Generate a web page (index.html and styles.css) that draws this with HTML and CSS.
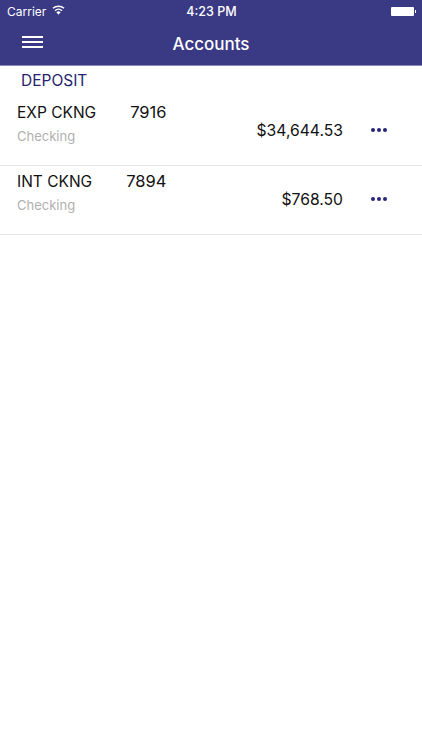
FILE: index.html
```html
<!DOCTYPE html>
<html lang="en">
<head>
  <meta charset="UTF-8" />
  <meta name="viewport" content="width=device-width, initial-scale=1" />
  <title>Accounts</title>
  <link rel="stylesheet" href="styles.css">
</head>
<body>
  <header class="topbar">
    <div class="status">
      <div class="status-left">
        <span>Carrier</span>
        <svg class="wifi" width="13" height="10" viewBox="0 0 14 10">
          <path d="M7 10 4.7 7.3a3.4 3.4 0 0 1 4.6 0z" fill="#fff"/>
          <path d="M3.3 5.7a5.4 5.4 0 0 1 7.4 0" fill="none" stroke="#fff" stroke-width="1.5"/>
          <path d="M1 3.2a9 9 0 0 1 12 0" fill="none" stroke="#fff" stroke-width="1.5"/>
        </svg>
      </div>
      <span class="clock">4:23 PM</span>
      <div class="battery"><div class="battery-fill"></div><div class="battery-tip"></div></div>
    </div>
    <nav class="navbar">
      <button class="menu" aria-label="Menu"><span></span><span></span><span></span></button>
      <h1>Accounts</h1>
    </nav>
  </header>

  <main>
    <h2 class="section">DEPOSIT</h2>

    <div class="account">
      <div class="info">
        <div class="title"><span>EXP CKNG</span><span class="num">7916</span></div>
        <div class="type">Checking</div>
      </div>
      <div class="amount">$34,644.53</div>
      <div class="dots"><i></i><i></i><i></i></div>
    </div>

    <div class="account">
      <div class="info">
        <div class="title"><span>INT CKNG</span><span class="num">7894</span></div>
        <div class="type">Checking</div>
      </div>
      <div class="amount">$768.50</div>
      <div class="dots"><i></i><i></i><i></i></div>
    </div>
  </main>
</body>
</html>
```

FILE: styles.css
```css
body {
  margin: 0;
  background: #fff;
  font-family: Inter, "Liberation Sans", Arial, sans-serif;
  color: #111;
}

.topbar {
  background: #3a3984;
  color: #fff;
  height: 65px;
  border-bottom: 1px solid #8a8ab8;
}
.status {
  height: 22px;
  display: flex;
  align-items: center;
  justify-content: space-between;
  padding: 0 6px 0 7px;
  font-size: 12px;
  position: relative;
}
.status-left {
  display: flex;
  align-items: center;
  gap: 6px;
}
.wifi { margin-top: -3px; }
.clock {
  position: absolute;
  left: 1px;
  right: 0;
  text-align: center;
  font-size: 12.5px;
  font-weight: 500;
}
.battery {
  display: flex;
  align-items: center;
  gap: 1px;
}
.battery-fill {
  width: 23px;
  height: 9px;
  background: #fff;
  border-radius: 1px;
}
.battery-tip {
  width: 1px;
  height: 3px;
  background: #fff;
}

.navbar {
  height: 43px;
  display: flex;
  align-items: center;
  justify-content: center;
  position: relative;
}
.navbar h1 {
  margin: 0;
  font-size: 17px;
  font-weight: 500;
}
.menu {
  position: absolute;
  left: 22px;
  top: 14px;
  width: 21px;
  padding: 0;
  border: none;
  background: none;
  display: flex;
  flex-direction: column;
  gap: 3px;
}
.menu span {
  height: 2px;
  background: #fff;
}

.section {
  margin: 0;
  padding: 5px 0 0 21px;
  height: 26px;
  font-size: 15.5px;
  line-height: 20px;
  font-weight: 400;
  color: #25236f;
}

.account {
  height: 68px;
  display: flex;
  align-items: center;
  padding: 0 35px 0 17px;
  border-bottom: 1px solid #e6e6e6;
}
.info {
  flex: 1;
  align-self: flex-start;
}
.title {
  display: flex;
  align-items: baseline;
  gap: 34px;
  font-size: 15.5px;
  line-height: 20px;
  margin-top: 5px;
}
.num {
  font-size: 16.5px;
}
.type {
  margin-top: 5px;
  font-size: 13px;
  line-height: 16px;
  color: #b0b0b0;
}
.amount {
  font-size: 15.7px;
  margin: 0 28px 2px 0;
}
.dots {
  display: flex;
  gap: 2px;
  margin-bottom: 2px;
}
.dots i {
  width: 4px;
  height: 4px;
  border-radius: 50%;
  background: #25237a;
}
```
